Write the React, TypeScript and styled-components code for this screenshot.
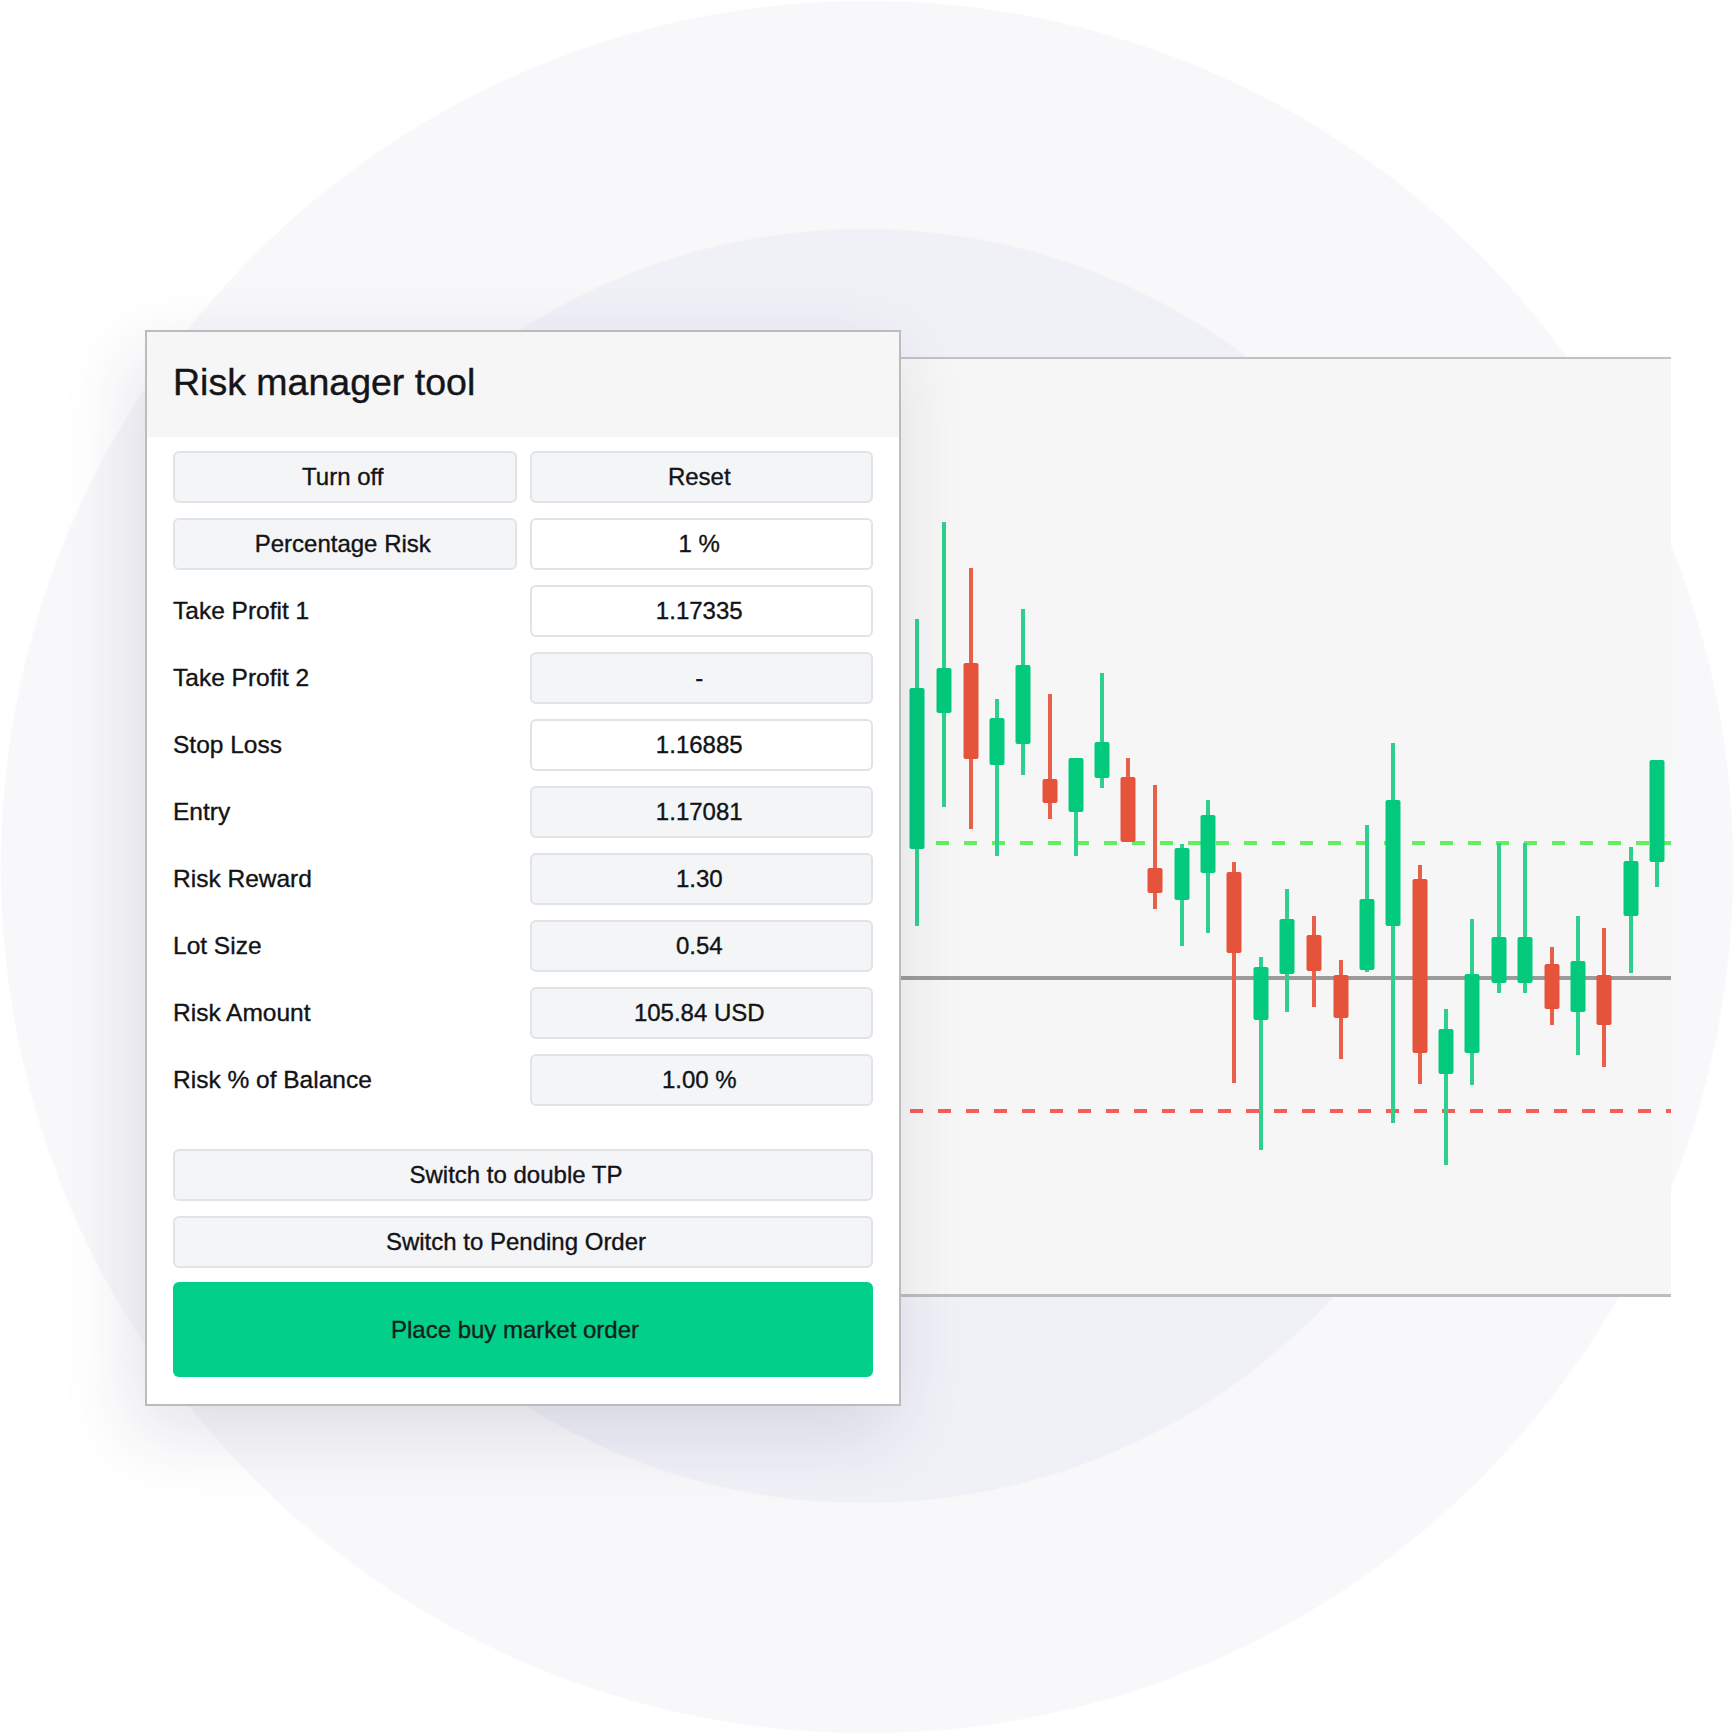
import styled, { createGlobalStyle } from 'styled-components'

const GlobalStyle = createGlobalStyle`
	html, body {
		margin: 0;
		padding: 0;
		background: #ffffff;
	}
	* {
		box-sizing: border-box;
	}
`

const Stage = styled.div`
	width: 1734px;
	height: 1734px;
	display: flex;
	align-items: flex-start;
	padding: 330px 0 0 145px;
	font-family: 'Liberation Sans', Arial, sans-serif;
	background:
		radial-gradient(circle 638px at 864px 866px, #f0f0f7 99.7%, transparent 100%),
		radial-gradient(circle 867px at 867px 867px, #f8f8fa 99.8%, #ffffff 100%);
	overflow: hidden;
`

const ToolPanel = styled.section`
	position: relative;
	z-index: 2;
	width: 756px;
	flex-shrink: 0;
	background: #ffffff;
	border: 2px solid #bcbcbc;
	box-shadow: -10px 26px 70px rgba(40, 40, 90, 0.13);
`

const Header = styled.header`
	height: 105px;
	display: flex;
	align-items: center;
	padding: 0 26px 4px;
	background: #f6f6f6;
`

const Title = styled.h1`
	margin: 0;
	font-size: 37.5px;
	font-weight: 400;
	color: #141518;
	-webkit-text-stroke: 0.4px #141518;
`

const Body = styled.div`
	display: flex;
	flex-direction: column;
	padding: 14px 26px 27px;
`

const Grid = styled.div`
	display: grid;
	grid-template-columns: 1fr 1fr;
	column-gap: 13px;
	row-gap: 15px;
`

const Label = styled.div`
	height: 52px;
	display: flex;
	align-items: center;
	font-size: 24.5px;
	color: #121316;
	-webkit-text-stroke: 0.35px #121316;
`

const Field = styled.div<{ $input?: boolean; $shift?: boolean }>`
	height: 52px;
	display: flex;
	align-items: center;
	justify-content: center;
	padding-right: ${(p) => (p.$shift ? '14px' : '4px')};
	font-size: 24px;
	color: #121316;
	-webkit-text-stroke: 0.35px #121316;
	background: ${(p) => (p.$input ? '#ffffff' : '#f4f5f7')};
	border: 2px solid #e0e3e7;
	border-radius: 6px;
`

const Actions = styled.div`
	display: flex;
	flex-direction: column;
	gap: 15px;
	margin-top: 43px;
`

const PrimaryButton = styled.div`
	height: 95px;
	margin-top: -1px;
	display: flex;
	align-items: center;
	justify-content: center;
	padding-right: 16px;
	font-size: 24px;
	color: #12211a;
	-webkit-text-stroke: 0.35px #12211a;
	background: #02cf89;
	border-radius: 6px;
`

const ChartPanel = styled.div`
	margin-top: 27px;
	width: 770px;
	height: 940px;
	flex-shrink: 0;
	background: #f6f6f6;
	border-top: 2px solid #c2c2c2;
	border-bottom: 3px solid #bdbdbd;

	svg {
		display: block;
	}
`

type Candle = [number, number, number, number, number, 'g' | 'r']

// x, wick top, wick bottom, body top, body bottom, colour (page coordinates)
const candles: Candle[] = [
	[917, 619, 926, 688, 849, 'g'],
	[944, 522, 807, 668, 713, 'g'],
	[971, 568, 829, 663, 759, 'r'],
	[997, 699, 856, 718, 765, 'g'],
	[1023, 609, 775, 665, 744, 'g'],
	[1050, 694, 819, 779, 803, 'r'],
	[1076, 758, 856, 758, 812, 'g'],
	[1102, 673, 788, 742, 778, 'g'],
	[1128, 758, 842, 777, 842, 'r'],
	[1155, 785, 909, 868, 893, 'r'],
	[1182, 844, 946, 848, 900, 'g'],
	[1208, 800, 933, 815, 873, 'g'],
	[1234, 862, 1083, 872, 953, 'r'],
	[1261, 957, 1150, 967, 1020, 'g'],
	[1287, 889, 1012, 919, 974, 'g'],
	[1314, 916, 1007, 935, 971, 'r'],
	[1341, 960, 1059, 975, 1018, 'r'],
	[1367, 825, 972, 899, 970, 'g'],
	[1393, 743, 1123, 800, 926, 'g'],
	[1420, 865, 1084, 879, 1053, 'r'],
	[1446, 1009, 1165, 1029, 1074, 'g'],
	[1472, 919, 1085, 974, 1053, 'g'],
	[1499, 843, 993, 937, 983, 'g'],
	[1525, 843, 993, 937, 983, 'g'],
	[1552, 947, 1025, 964, 1009, 'r'],
	[1578, 916, 1055, 961, 1012, 'g'],
	[1604, 928, 1067, 975, 1025, 'r'],
	[1631, 847, 973, 861, 916, 'g'],
	[1657, 760, 887, 760, 862, 'g'],
]

const CandleChart = () => (
	<svg width={770} height={935} viewBox="0 0 770 935">
		<g transform="translate(-901 -359)">
			<line x1={901} y1={978} x2={1671} y2={978} stroke="#9b9b9b" strokeWidth={4} />
			<line x1={936} y1={843} x2={1671} y2={843} stroke="#62ef62" strokeWidth={4} strokeDasharray="13 15" />
			<line x1={910} y1={1111} x2={1671} y2={1111} stroke="#f25e5a" strokeWidth={4} strokeDasharray="13 15" />
			{candles.map(([x, wt, wb, bt, bb, c]) => {
				const body = c === 'g' ? '#02c97b' : '#e5533b'
				const wick = c === 'g' ? '#2fd08f' : '#e8604a'
				return (
					<g key={x}>
						<rect x={x - 2} y={wt} width={4} height={wb - wt} fill={wick} />
						<rect x={x - 7.5} y={bt} width={15} height={bb - bt} rx={2} fill={body} />
					</g>
				)
			})}
		</g>
	</svg>
)

const rows: { label: string; value: string; input?: boolean }[] = [
	{ label: 'Take Profit 1', value: '1.17335', input: true },
	{ label: 'Take Profit 2', value: '-' },
	{ label: 'Stop Loss', value: '1.16885', input: true },
	{ label: 'Entry', value: '1.17081' },
	{ label: 'Risk Reward', value: '1.30' },
	{ label: 'Lot Size', value: '0.54' },
	{ label: 'Risk Amount', value: '105.84 USD' },
	{ label: 'Risk % of Balance', value: '1.00 %' },
]

export default function App() {
	return (
		<>
			<GlobalStyle />
			<Stage>
				<ToolPanel>
					<Header>
						<Title>Risk manager tool</Title>
					</Header>
					<Body>
						<Grid>
							<Field>Turn off</Field>
							<Field>Reset</Field>
							<Field>Percentage Risk</Field>
							<Field $input>1 %</Field>
							{rows.map((r) => [
								<Label key={r.label}>{r.label}</Label>,
								<Field key={r.label + '-v'} $input={r.input}>
									{r.value}
								</Field>,
							])}
						</Grid>
						<Actions>
							<Field $shift>Switch to double TP</Field>
							<Field $shift>Switch to Pending Order</Field>
							<PrimaryButton>Place buy market order</PrimaryButton>
						</Actions>
					</Body>
				</ToolPanel>
				<ChartPanel>
					<CandleChart />
				</ChartPanel>
			</Stage>
		</>
	)
}
